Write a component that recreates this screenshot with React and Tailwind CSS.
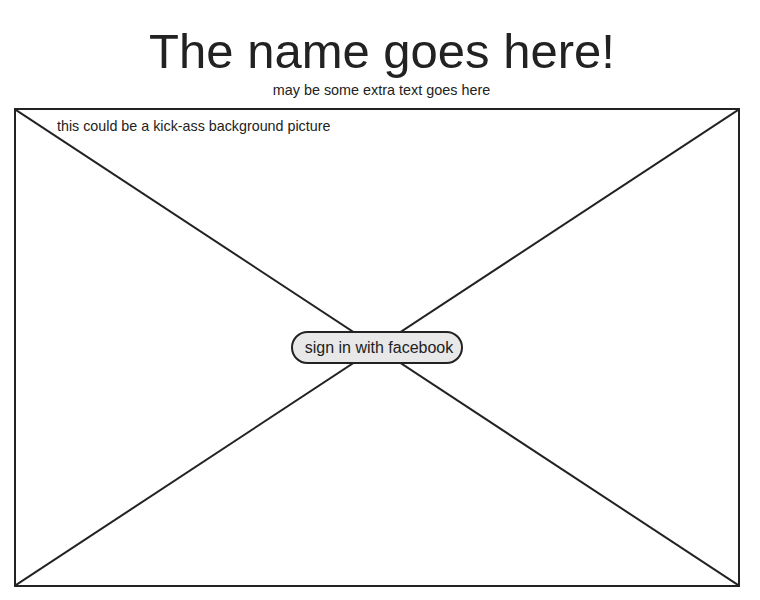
import React from 'react'

export default function App(){
  return (
    <div className="w-[760px] h-[600px] bg-white text-[#222] font-['Liberation_Sans',Arial,sans-serif] px-[14px]">
      <h1 className="pt-[27px] pl-[4px] text-center text-[49px] leading-none font-normal">The name goes here!</h1>
      <p className="mt-[4px] pl-[3px] text-center text-[14.4px] leading-5">may be some extra text goes here</p>
      <div className="relative mt-[8px] w-[726px] h-[479px] border-2 border-[#222]">
        {/* placeholder X for the background picture */}
        <svg className="absolute inset-0 w-full h-full" viewBox="0 0 100 100" preserveAspectRatio="none">
          <line x1="0" y1="0" x2="100" y2="100" stroke="#222" strokeWidth="2" vectorEffect="non-scaling-stroke" />
          <line x1="100" y1="0" x2="0" y2="100" stroke="#222" strokeWidth="2" vectorEffect="non-scaling-stroke" />
        </svg>
        <div className="relative pt-[6px] pl-[41px] text-[14.3px] leading-5">this could be a kick-ass background picture</div>
        <div className="absolute inset-0 flex items-center justify-center">
          <button className="h-[33px] pl-[12px] pr-[8px] rounded-full border-2 border-[#222] bg-[#e8e8e8] text-base leading-none">sign in with facebook</button>
        </div>
      </div>
    </div>
  )
}
